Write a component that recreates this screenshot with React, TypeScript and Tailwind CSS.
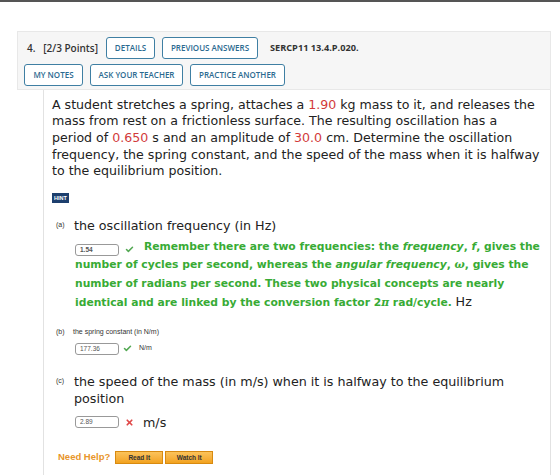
import { Check, X } from "lucide-react";

const open = { fontFamily: '"Open Sans", "Liberation Sans", sans-serif' };
const verdana = { fontFamily: '"DejaVu Sans", Verdana, sans-serif' };
const arial = { fontFamily: '"Liberation Sans", Arial, sans-serif' };
const serif = { fontFamily: '"DejaVu Serif", serif' };

function OutlineBtn({ label, w }: { label: string; w: string }) {
  return (
    <button
      className={`h-[22px] ${w} rounded-[3px] border-[1.5px] border-[#3f7fa3] bg-white text-[8px] font-semibold text-[#2b6a90]`}
      style={open}
    >
      {label}
    </button>
  );
}

function Answer({ value }: { value: string }) {
  return (
    <span
      className="inline-flex h-[12px] w-[44px] shrink-0 items-center rounded-[3px] border border-[#999] bg-white pl-[4px] text-[6.5px] text-[#555]"
      style={arial}
    >
      {value}
    </span>
  );
}

function Red({ children }: { children: string }) {
  return <span className="text-[#d23a3a]">{children}</span>;
}

export default function App() {
  return (
    <div className="h-[475px] w-[560px] overflow-hidden border-t-2 border-[#555] bg-white">
      <div className="mt-[29px] ml-[17px] w-[534px] border border-[#e8e8e8] bg-[#f6f6f6] pt-[5px] pb-[3px] pl-[6px]">
        <div className="flex items-center gap-[7px]">
          <span className="pl-[3px] pr-[1px] text-[10px] font-semibold text-[#333]" style={open}>
            4.&nbsp;&nbsp;&nbsp;[2/3 Points]
          </span>
          <OutlineBtn label="DETAILS" w="w-[49px]" />
          <OutlineBtn label="PREVIOUS ANSWERS" w="w-[96px]" />
          <span className="pl-[5px] text-[9.2px] font-bold text-[#333]" style={open}>
            SERCP11 13.4.P.020.
          </span>
        </div>
        <div className="mt-[5px] flex items-center gap-[7px]">
          <OutlineBtn label="MY NOTES" w="w-[59px]" />
          <OutlineBtn label="ASK YOUR TEACHER" w="w-[93px]" />
          <OutlineBtn label="PRACTICE ANOTHER" w="w-[95px]" />
        </div>
      </div>

      <div className="ml-[43px] h-[400px] w-[508px] border-x border-[#e2e2e2] pl-[8px] pr-[4px] pt-[6.5px]" style={verdana}>
        <p className="whitespace-nowrap text-[12.6px] leading-[16.7px] text-[#222]">
          A student stretches a spring, attaches a <Red>1.90</Red> kg mass to it, and releases the
          <br />
          mass from rest on a frictionless surface. The resulting oscillation has a
          <br />
          period of <Red>0.650</Red> s and an amplitude of <Red>30.0</Red> cm. Determine the oscillation
          <br />
          frequency, the spring constant, and the speed of the mass when it is halfway
          <br />
          to the equilibrium position.
        </p>

        <div className="mt-[13px] flex">
          <span className="flex h-[10px] w-[17px] items-center justify-center bg-[#1d3f6e] text-[5.5px] font-bold text-white" style={arial}>
            HINT
          </span>
        </div>

        {/* part (a) */}
        <div className="mt-[14.5px] flex h-[16px] items-center">
          <span className="w-[22px] pl-[4px] text-[7px] text-[#333]" style={arial}>(a)</span>
          <span className="text-[12.7px] text-[#222]">the oscillation frequency (in Hz)</span>
        </div>
        <div className="mt-[4px] pl-[23px] pr-[4px] text-[10.75px] font-bold leading-[18.5px] text-[#38ab35]">
          <span className="inline-flex items-center align-[-2px]">
            <Answer value="1.54" />
            <Check className="ml-[6px] mr-[10px] h-[9px] w-[9px] text-[#52a852]" strokeWidth={4} />
          </span>
          Remember there are two frequencies: the <i>frequency</i>, <i>f</i>, gives the number of cycles per
          second, whereas the <i>angular frequency</i>, <i style={serif}>ω</i>, gives the number of radians per
          second. These two physical concepts are nearly identical and are linked by the conversion factor
          2<i style={serif}>π</i> rad/cycle.{" "}
          <span className="text-[12.7px] font-normal text-[#222]">Hz</span>
        </div>

        {/* part (b) */}
        <div className="mt-[14.5px] flex h-[10px] items-center text-[7px] text-[#333]" style={arial}>
          <span className="w-[21px] pl-[4px]">(b)</span>
          <span>the spring constant (in N/m)</span>
        </div>
        <div className="mt-[5px] flex h-[13px] items-center pl-[23px]">
          <Answer value="177.36" />
          <Check className="ml-[4px] mr-[7px] h-[9px] w-[9px] text-[#52a852]" strokeWidth={4} />
          <span className="text-[7px] text-[#333]" style={arial}>N/m</span>
        </div>

        {/* part (c) */}
        <div className="mt-[17.5px] flex pr-[4px]">
          <span className="flex h-[17.3px] w-[22px] shrink-0 items-center pl-[4px] text-[7px] text-[#333]" style={arial}>(c)</span>
          <span className="text-[12.7px] leading-[17.3px] text-[#222]">
            the speed of the mass (in m/s) when it is halfway to the equilibrium position
          </span>
        </div>
        <div className="mt-[9px] flex h-[12px] items-center pl-[23px]">
          <Answer value="2.89" />
          <X className="ml-[6px] mr-[9px] h-[9px] w-[9px] text-[#e04848]" strokeWidth={4.5} />
          <span className="text-[12.7px] text-[#222]">m/s</span>
        </div>

        {/* help */}
        <div className="mt-[23px] flex h-[13px] items-center pl-[6px]" style={arial}>
          <span className="mr-[5px] text-[9.5px] font-bold text-[#e8952a]">Need Help?</span>
          <button className="mr-[2px] h-[13px] w-[48px] border border-[#d88a10] bg-gradient-to-b from-[#fbc35a] to-[#f2a21c] text-[6.5px] font-bold text-[#333]">
            Read It
          </button>
          <button className="h-[13px] w-[48px] border border-[#d88a10] bg-gradient-to-b from-[#fbc35a] to-[#f2a21c] text-[6.5px] font-bold text-[#333]">
            Watch It
          </button>
        </div>
      </div>
    </div>
  );
}
